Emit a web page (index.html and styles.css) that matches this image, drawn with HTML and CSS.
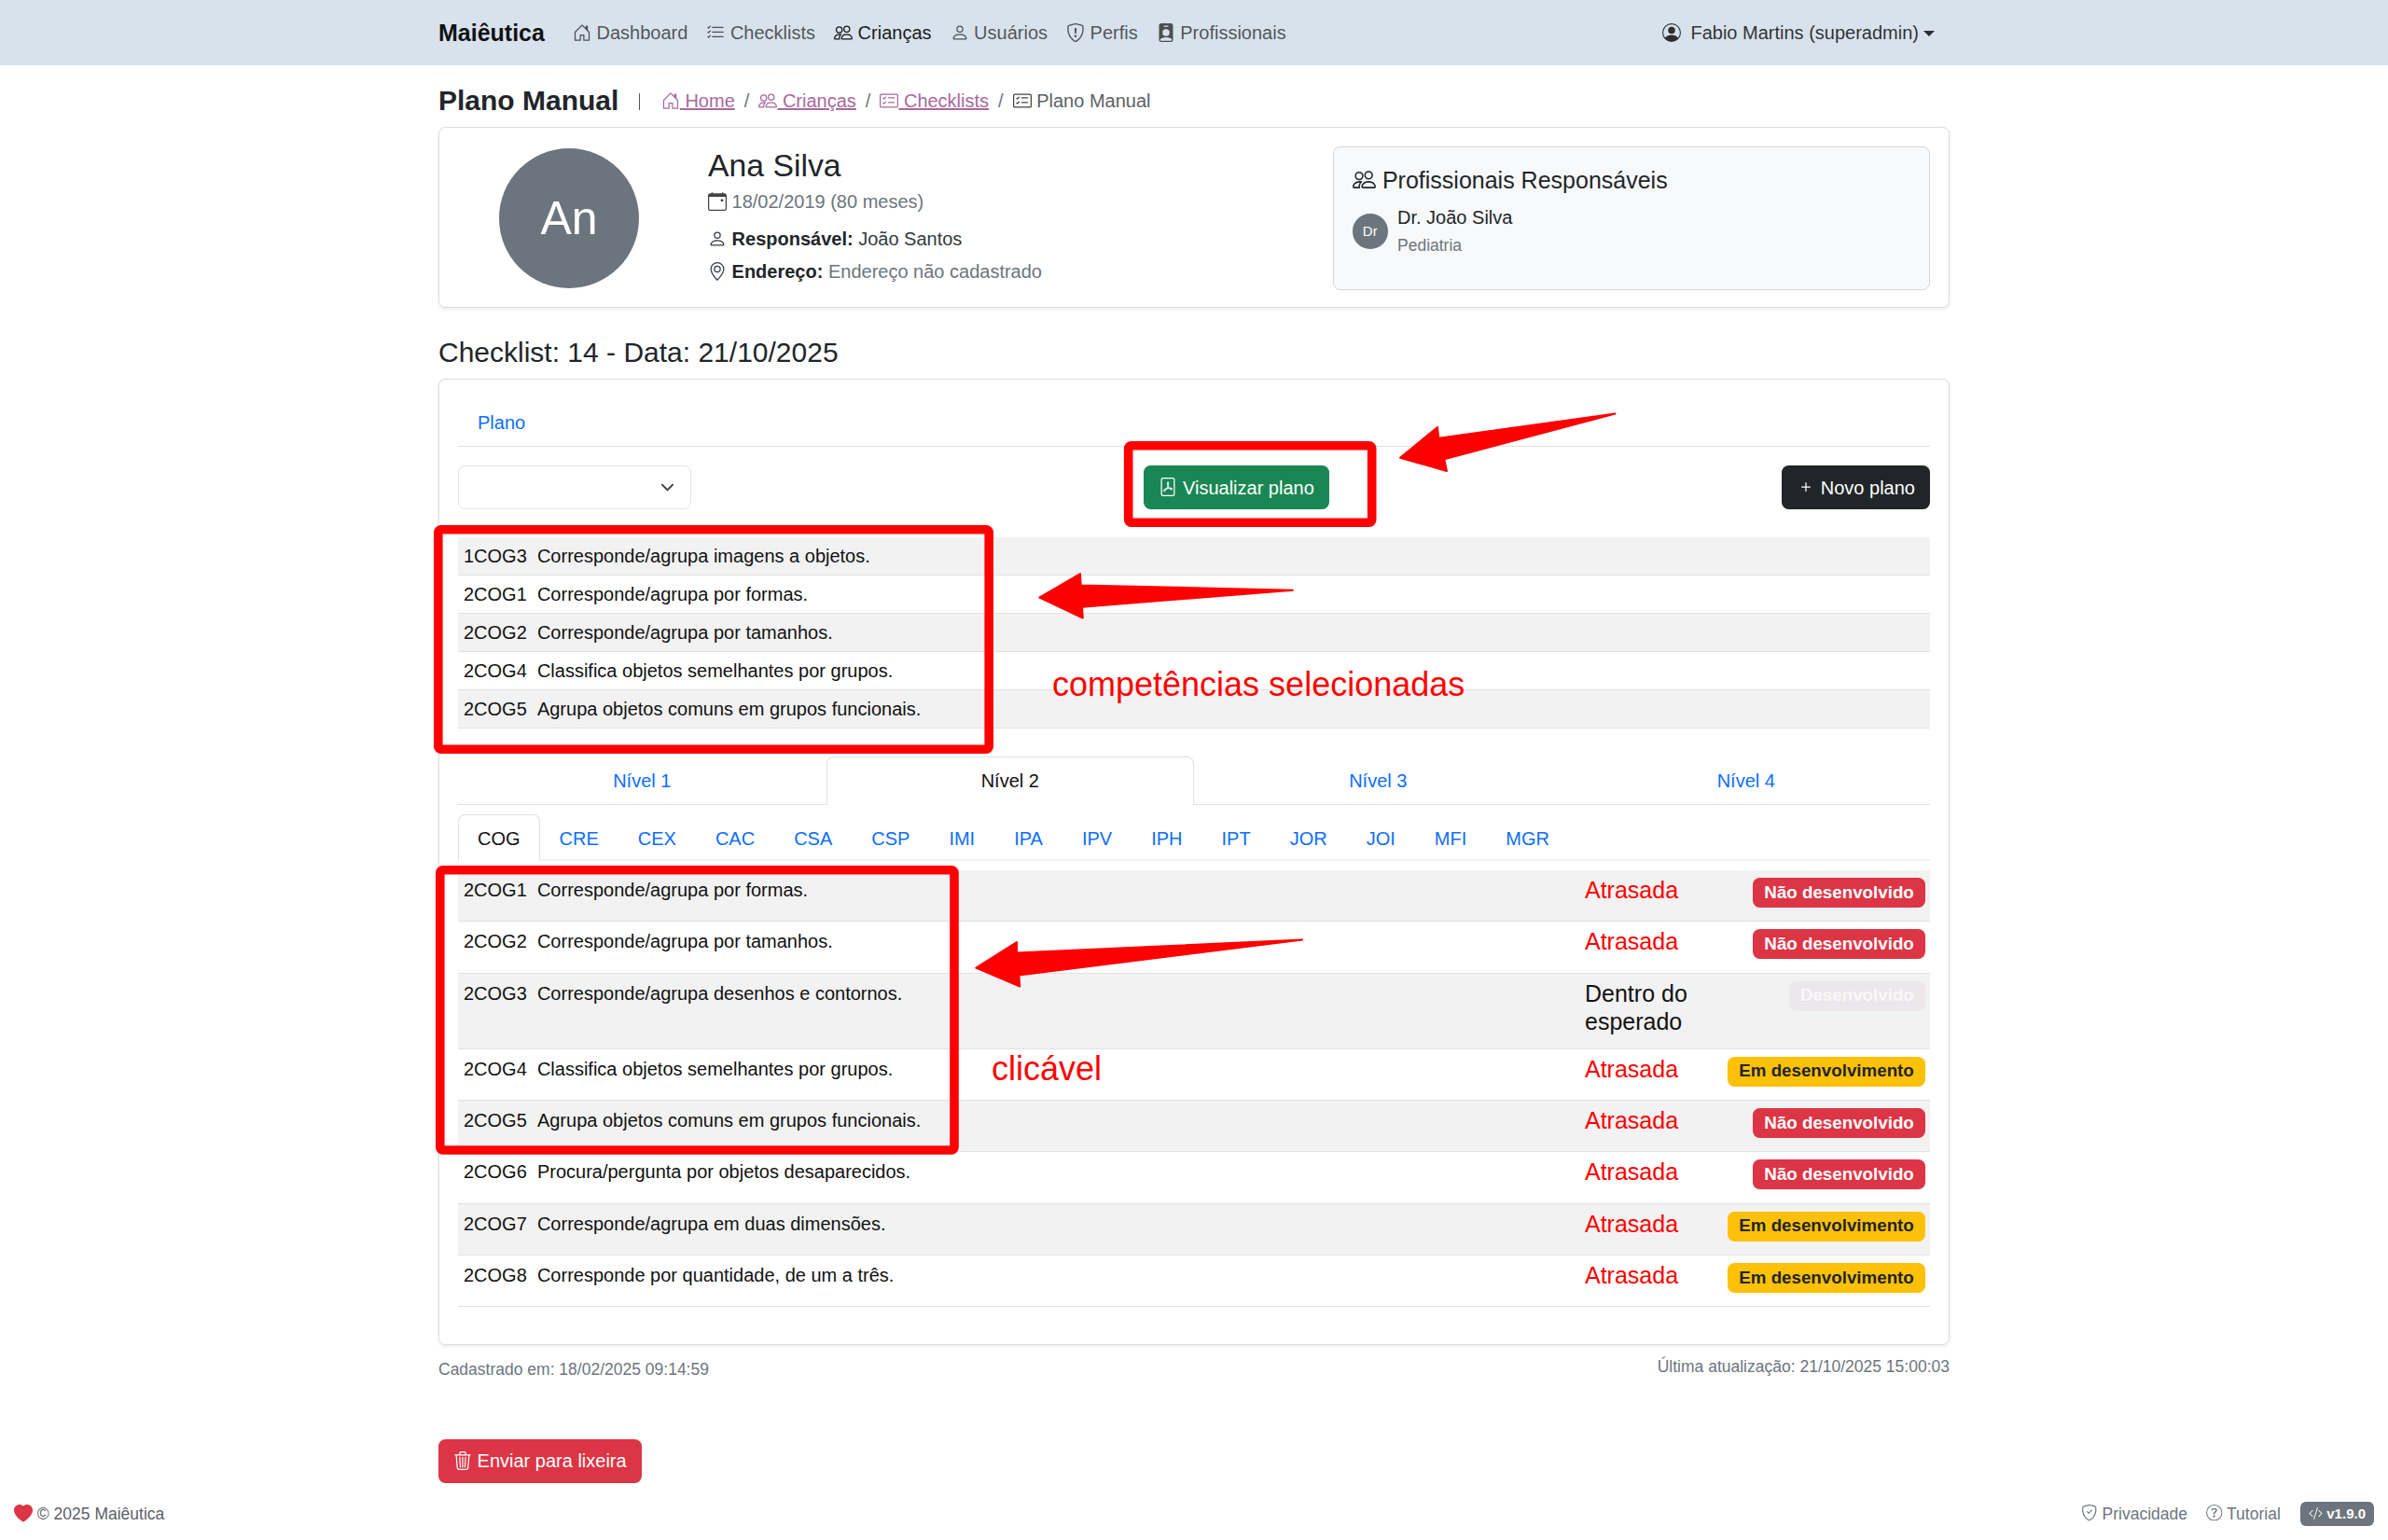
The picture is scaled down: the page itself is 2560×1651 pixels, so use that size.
FILE: index.html
```html
<!DOCTYPE html>
<html lang="pt-BR">
<head>
<meta charset="utf-8">
<title>Plano Manual - Maiêutica</title>
<link rel="stylesheet" href="styles.css">
</head>
<body>
<svg class="sprite" xmlns="http://www.w3.org/2000/svg">
<symbol id="i-house" viewBox="0 0 16 16"><path d="M8.354 1.146a.5.5 0 0 0-.708 0l-6 6A.5.5 0 0 0 1.5 7.5v7a.5.5 0 0 0 .5.5h4.5a.5.5 0 0 0 .5-.5v-4h2v4a.5.5 0 0 0 .5.5H14a.5.5 0 0 0 .5-.5v-7a.5.5 0 0 0-.146-.354L13 5.793V2.5a.5.5 0 0 0-.5-.5h-1a.5.5 0 0 0-.5.5v1.293zM2.5 14V7.707l5.5-5.5 5.5 5.5V14H10v-4a.5.5 0 0 0-.5-.5h-3a.5.5 0 0 0-.5.5v4z"/></symbol>
<symbol id="i-list" viewBox="0 0 16 16"><path fill-rule="evenodd" d="M5 11.5a.5.5 0 0 1 .5-.5h9a.5.5 0 0 1 0 1h-9a.5.5 0 0 1-.5-.5m0-4a.5.5 0 0 1 .5-.5h9a.5.5 0 0 1 0 1h-9a.5.5 0 0 1-.5-.5m0-4a.5.5 0 0 1 .5-.5h9a.5.5 0 0 1 0 1h-9a.5.5 0 0 1-.5-.5M3.854 2.146a.5.5 0 0 1 0 .708l-1.5 1.5a.5.5 0 0 1-.708 0l-.5-.5a.5.5 0 1 1 .708-.708L2 3.293l1.146-1.147a.5.5 0 0 1 .708 0m0 4a.5.5 0 0 1 0 .708l-1.5 1.5a.5.5 0 0 1-.708 0l-.5-.5a.5.5 0 1 1 .708-.708L2 7.293l1.146-1.147a.5.5 0 0 1 .708 0m0 4a.5.5 0 0 1 0 .708l-1.5 1.5a.5.5 0 0 1-.708 0l-.5-.5a.5.5 0 0 1 .708-.708l.146.147 1.146-1.147a.5.5 0 0 1 .708 0"/></symbol>
<symbol id="i-people" viewBox="0 0 16 16"><path d="M15 14s1 0 1-1-1-4-5-4-5 3-5 4 1 1 1 1zm-7.978-1L7 12.996c.001-.264.167-1.03.76-1.72C8.312 10.629 9.282 10 11 10c1.717 0 2.687.63 3.24 1.276.593.69.758 1.457.76 1.72l-.008.002-.014.002zM11 7a2 2 0 1 0 0-4 2 2 0 0 0 0 4m3-2a3 3 0 1 1-6 0 3 3 0 0 1 6 0M6.936 9.28a6 6 0 0 0-1.23-.247A7 7 0 0 0 5 9c-4 0-5 3-5 4q0 1 1 1h4.216A2.24 2.24 0 0 1 5 13c0-1.01.377-2.042 1.09-2.904.243-.294.526-.569.846-.816M4.92 10A5.5 5.5 0 0 0 4 13H1c0-.26.164-1.03.76-1.724.545-.636 1.492-1.256 3.16-1.275ZM1.5 5.5a3 3 0 1 1 6 0 3 3 0 0 1-6 0m3-2a2 2 0 1 0 0 4 2 2 0 0 0 0-4"/></symbol>
<symbol id="i-person" viewBox="0 0 16 16"><path d="M8 8a3 3 0 1 0 0-6 3 3 0 0 0 0 6m2-3a2 2 0 1 1-4 0 2 2 0 0 1 4 0m4 8c0 1-1 1-1 1H3s-1 0-1-1 1-4 6-4 6 3 6 4m-1-.004c-.001-.246-.154-.986-.832-1.664C11.516 10.68 10.289 10 8 10s-3.516.68-4.168 1.332c-.678.678-.83 1.418-.832 1.664z"/></symbol>
<symbol id="i-shield" viewBox="0 0 16 16"><path d="M5.338 1.59a61 61 0 0 0-2.837.856.48.48 0 0 0-.328.39c-.554 4.157.726 7.19 2.253 9.188a10.7 10.7 0 0 0 2.287 2.233c.346.244.652.42.893.533q.18.085.293.118a1 1 0 0 0 .101.025 1 1 0 0 0 .1-.025q.114-.034.294-.118c.24-.113.547-.29.893-.533a10.7 10.7 0 0 0 2.287-2.233c1.527-1.997 2.807-5.031 2.253-9.188a.48.48 0 0 0-.328-.39c-.651-.213-1.75-.56-2.837-.855C9.552 1.29 8.531 1.067 8 1.067c-.53 0-1.552.223-2.662.524zM5.072.56C6.157.265 7.31 0 8 0s1.843.265 2.928.56c1.11.3 2.229.655 2.887.87a1.54 1.54 0 0 1 1.044 1.262c.596 4.477-.787 7.795-2.465 9.99a11.8 11.8 0 0 1-2.517 2.453 7 7 0 0 1-1.048.625c-.28.132-.581.24-.829.24s-.548-.108-.829-.24a7 7 0 0 1-1.048-.625 11.8 11.8 0 0 1-2.517-2.453C1.928 10.487.545 7.169 1.141 2.692A1.54 1.54 0 0 1 2.185 1.43 63 63 0 0 1 5.072.56"/><path d="M7.001 11a1 1 0 1 1 2 0 1 1 0 0 1-2 0M7.1 4.995a.905.905 0 1 1 1.8 0l-.35 3.507a.553.553 0 0 1-1.1 0z"/></symbol>
<symbol id="i-shield-check" viewBox="0 0 16 16"><path d="M5.338 1.59a61 61 0 0 0-2.837.856.48.48 0 0 0-.328.39c-.554 4.157.726 7.19 2.253 9.188a10.7 10.7 0 0 0 2.287 2.233c.346.244.652.42.893.533q.18.085.293.118a1 1 0 0 0 .101.025 1 1 0 0 0 .1-.025q.114-.034.294-.118c.24-.113.547-.29.893-.533a10.7 10.7 0 0 0 2.287-2.233c1.527-1.997 2.807-5.031 2.253-9.188a.48.48 0 0 0-.328-.39c-.651-.213-1.75-.56-2.837-.855C9.552 1.29 8.531 1.067 8 1.067c-.53 0-1.552.223-2.662.524zM5.072.56C6.157.265 7.31 0 8 0s1.843.265 2.928.56c1.11.3 2.229.655 2.887.87a1.54 1.54 0 0 1 1.044 1.262c.596 4.477-.787 7.795-2.465 9.99a11.8 11.8 0 0 1-2.517 2.453 7 7 0 0 1-1.048.625c-.28.132-.581.24-.829.24s-.548-.108-.829-.24a7 7 0 0 1-1.048-.625 11.8 11.8 0 0 1-2.517-2.453C1.928 10.487.545 7.169 1.141 2.692A1.54 1.54 0 0 1 2.185 1.43 63 63 0 0 1 5.072.56"/><path d="M10.854 5.146a.5.5 0 0 1 0 .708l-3 3a.5.5 0 0 1-.708 0l-1.5-1.5a.5.5 0 1 1 .708-.708L7.5 7.793l2.646-2.647a.5.5 0 0 1 .708 0"/></symbol>
<symbol id="i-badge" viewBox="0 0 16 16"><path d="M2 2a2 2 0 0 1 2-2h8a2 2 0 0 1 2 2v12a2 2 0 0 1-2 2H4a2 2 0 0 1-2-2zm4.5 0a.5.5 0 0 0 0 1h3a.5.5 0 0 0 0-1zM8 11a3 3 0 1 0 0-6 3 3 0 0 0 0 6m5 2.755C12.146 12.825 10.623 12 8 12s-4.146.826-5 1.755V14a1 1 0 0 0 1 1h8a1 1 0 0 0 1-1z"/></symbol>
<symbol id="i-circle" viewBox="0 0 16 16"><path d="M11 6a3 3 0 1 1-6 0 3 3 0 0 1 6 0"/><path fill-rule="evenodd" d="M0 8a8 8 0 1 1 16 0A8 8 0 0 1 0 8m8-7a7 7 0 0 0-5.468 11.37C3.242 11.226 4.805 10 8 10s4.757 1.225 5.468 2.37A7 7 0 0 0 8 1"/></symbol>
<symbol id="i-calendar" viewBox="0 0 16 16"><path d="M11 6.5a.5.5 0 0 1 .5-.5h1a.5.5 0 0 1 .5.5v1a.5.5 0 0 1-.5.5h-1a.5.5 0 0 1-.5-.5z"/><path d="M3.5 0a.5.5 0 0 1 .5.5V1h8V.5a.5.5 0 0 1 1 0V1h1a2 2 0 0 1 2 2v11a2 2 0 0 1-2 2H2a2 2 0 0 1-2-2V3a2 2 0 0 1 2-2h1V.5a.5.5 0 0 1 .5-.5M1 4v10a1 1 0 0 0 1 1h12a1 1 0 0 0 1-1V4z"/></symbol>
<symbol id="i-geo" viewBox="0 0 16 16"><path d="M12.166 8.94c-.524 1.062-1.234 2.12-1.96 3.07A32 32 0 0 1 8 14.58a32 32 0 0 1-2.206-2.57c-.726-.95-1.436-2.008-1.96-3.07C3.304 7.867 3 6.862 3 6a5 5 0 0 1 10 0c0 .862-.305 1.867-.834 2.94M8 16s6-5.686 6-10A6 6 0 0 0 2 6c0 4.314 6 10 6 10"/><path d="M8 8a2 2 0 1 1 0-4 2 2 0 0 1 0 4m0 1a3 3 0 1 0 0-6 3 3 0 0 0 0 6"/></symbol>
<symbol id="i-card" viewBox="0 0 16 16"><path d="M14.5 3a.5.5 0 0 1 .5.5v9a.5.5 0 0 1-.5.5h-13a.5.5 0 0 1-.5-.5v-9a.5.5 0 0 1 .5-.5zm-13-1A1.5 1.5 0 0 0 0 3.5v9A1.5 1.5 0 0 0 1.5 14h13a1.5 1.5 0 0 0 1.5-1.5v-9A1.5 1.5 0 0 0 14.5 2z"/><path d="M7 5.5a.5.5 0 0 1 .5-.5h5a.5.5 0 0 1 0 1h-5a.5.5 0 0 1-.5-.5m-1.496-.854a.5.5 0 0 1 0 .708l-1.5 1.5a.5.5 0 0 1-.708 0l-.5-.5a.5.5 0 1 1 .708-.708l.146.147 1.146-1.147a.5.5 0 0 1 .708 0M7 9.5a.5.5 0 0 1 .5-.5h5a.5.5 0 0 1 0 1h-5a.5.5 0 0 1-.5-.5m-1.496-.854a.5.5 0 0 1 0 .708l-1.5 1.5a.5.5 0 0 1-.708 0l-.5-.5a.5.5 0 0 1 .708-.708l.146.147 1.146-1.147a.5.5 0 0 1 .708 0"/></symbol>
<symbol id="i-pdf" viewBox="0 0 16 16"><path d="M4 0a2 2 0 0 0-2 2v12a2 2 0 0 0 2 2h8a2 2 0 0 0 2-2V2a2 2 0 0 0-2-2zm0 1h8a1 1 0 0 1 1 1v12a1 1 0 0 1-1 1H4a1 1 0 0 1-1-1V2a1 1 0 0 1 1-1"/><path d="M4.603 12.087a.8.8 0 0 1-.438-.42c-.195-.388-.13-.776.08-1.102.198-.307.526-.568.897-.787a7.7 7.7 0 0 1 1.482-.645 20 20 0 0 0 1.062-2.227 7.3 7.3 0 0 1-.43-1.295c-.086-.4-.119-.796-.046-1.136.075-.354.274-.672.65-.823.192-.077.4-.12.602-.077a.7.7 0 0 1 .477.365c.088.164.12.356.127.538.007.187-.012.395-.047.614-.084.51-.27 1.134-.52 1.794a11 11 0 0 0 .98 1.686 5.8 5.8 0 0 1 1.334.05c.364.065.734.195.96.465.12.144.193.32.2.518.007.192-.047.382-.138.563a1.04 1.04 0 0 1-.354.416.86.86 0 0 1-.51.138c-.331-.014-.654-.196-.933-.417a5.7 5.7 0 0 1-.911-.95 11.6 11.6 0 0 0-1.997.406 11.3 11.3 0 0 1-1.021 1.51c-.29.35-.608.655-.926.787a.8.8 0 0 1-.58.029m1.379-1.901q-.25.115-.459.238c-.328.194-.541.383-.647.547-.094.145-.096.25-.04.361q.016.032.026.044l.035-.012c.137-.056.355-.235.635-.572a8 8 0 0 0 .45-.606m1.64-1.33a13 13 0 0 1 1.01-.193 12 12 0 0 1-.51-.858 21 21 0 0 1-.5 1.05zm2.446.45q.226.245.435.41c.24.19.407.253.498.256a.1.1 0 0 0 .07-.015.3.3 0 0 0 .094-.125.44.44 0 0 0 .059-.2.1.1 0 0 0-.026-.063c-.052-.062-.2-.152-.518-.209a4 4 0 0 0-.612-.053zM8.078 5.8a7 7 0 0 0 .2-.828q.046-.282.038-.465a.6.6 0 0 0-.032-.198.5.5 0 0 0-.145.04c-.087.035-.158.106-.196.283-.04.192-.03.469.046.822q.036.167.09.346z"/></symbol>
<symbol id="i-trash" viewBox="0 0 16 16"><path d="M6.5 1h3a.5.5 0 0 1 .5.5v1H6v-1a.5.5 0 0 1 .5-.5M11 2.5v-1A1.5 1.5 0 0 0 9.5 0h-3A1.5 1.5 0 0 0 5 1.5v1H1.5a.5.5 0 0 0 0 1h.538l.853 10.66A2 2 0 0 0 4.885 16h6.23a2 2 0 0 0 1.994-1.84l.853-10.66h.538a.5.5 0 0 0 0-1zm1.958 1-.846 10.58a1 1 0 0 1-.997.92h-6.23a1 1 0 0 1-.997-.92L3.042 3.5zm-7.487 1a.5.5 0 0 1 .528.47l.5 8.5a.5.5 0 0 1-.998.06L5 5.03a.5.5 0 0 1 .47-.53Zm5.058 0a.5.5 0 0 1 .47.53l-.5 8.5a.5.5 0 1 1-.998-.06l.5-8.5a.5.5 0 0 1 .528-.47M8 4.5a.5.5 0 0 1 .5.5v8.5a.5.5 0 0 1-1 0V5a.5.5 0 0 1 .5-.5"/></symbol>
<symbol id="i-heart" viewBox="0 0 16 16"><path fill-rule="evenodd" d="M8 1.314C12.438-3.248 23.534 4.735 8 15-7.534 4.736 3.562-3.248 8 1.314"/></symbol>
<symbol id="i-question" viewBox="0 0 16 16"><path d="M8 15A7 7 0 1 1 8 1a7 7 0 0 1 0 14m0 1A8 8 0 1 0 8 0a8 8 0 0 0 0 16"/><path d="M5.255 5.786a.237.237 0 0 0 .241.247h.825c.138 0 .248-.113.266-.25.09-.656.54-1.134 1.342-1.134.686 0 1.314.343 1.314 1.168 0 .635-.374.927-.965 1.371-.673.489-1.206 1.06-1.168 1.987l.003.217a.25.25 0 0 0 .25.246h.811a.25.25 0 0 0 .25-.25v-.105c0-.718.273-.927 1.01-1.486.609-.463 1.244-.977 1.244-2.056 0-1.511-1.276-2.241-2.673-2.241-1.267 0-2.655.59-2.75 2.286m1.557 5.763c0 .533.425.927 1.01.927.609 0 1.028-.394 1.028-.927 0-.552-.42-.94-1.029-.94-.584 0-1.009.388-1.009.94"/></symbol>
<symbol id="i-code" viewBox="0 0 16 16"><path d="M10.478 1.647a.5.5 0 1 0-.956-.294l-4 13a.5.5 0 0 0 .956.294zM4.854 4.146a.5.5 0 0 1 0 .708L1.707 8l3.147 3.146a.5.5 0 0 1-.708.708l-3.5-3.5a.5.5 0 0 1 0-.708l3.5-3.5a.5.5 0 0 1 .708 0m6.292 0a.5.5 0 0 0 0 .708L14.293 8l-3.147 3.146a.5.5 0 0 0 .708.708l3.5-3.5a.5.5 0 0 0 0-.708l-3.5-3.5a.5.5 0 0 0-.708 0"/></symbol>
<symbol id="i-plus" viewBox="0 0 16 16"><path d="M8 4a.5.5 0 0 1 .5.5v3h3a.5.5 0 0 1 0 1h-3v3a.5.5 0 0 1-1 0v-3h-3a.5.5 0 0 1 0-1h3v-3A.5.5 0 0 1 8 4"/></symbol>
<symbol id="i-chevron" viewBox="0 0 16 16"><path fill="none" stroke="#343a40" stroke-linecap="round" stroke-linejoin="round" stroke-width="2" d="m2 5 6 6 6-6"/></symbol>
</svg>

<header class="navbar">
  <div class="container navbar-inner">
    <a class="brand">Maiêutica</a>
    <nav class="nav-links">
      <a class="nav-link"><svg class="bi"><use href="#i-house"/></svg> Dashboard</a>
      <a class="nav-link"><svg class="bi"><use href="#i-list"/></svg> Checklists</a>
      <a class="nav-link active"><svg class="bi"><use href="#i-people"/></svg> Crianças</a>
      <a class="nav-link"><svg class="bi"><use href="#i-person"/></svg> Usuários</a>
      <a class="nav-link"><svg class="bi"><use href="#i-shield"/></svg> Perfis</a>
      <a class="nav-link"><svg class="bi"><use href="#i-badge"/></svg> Profissionais</a>
    </nav>
    <a class="user-menu"><svg class="bi user-icon"><use href="#i-circle"/></svg> Fabio Martins (superadmin)<span class="caret"></span></a>
  </div>
</header>

<main class="container">
  <div class="title-row">
    <h1 class="page-title">Plano Manual</h1>
    <span class="title-divider"></span>
    <ol class="breadcrumb">
      <li><a><svg class="bi"><use href="#i-house"/></svg><u> Home</u></a></li>
      <li class="sep">/</li>
      <li><a><svg class="bi"><use href="#i-people"/></svg><u> Crianças</u></a></li>
      <li class="sep">/</li>
      <li><a><svg class="bi"><use href="#i-card"/></svg><u> Checklists</u></a></li>
      <li class="sep">/</li>
      <li class="current"><svg class="bi"><use href="#i-card"/></svg> Plano Manual</li>
    </ol>
  </div>

  <section class="card profile">
    <div class="avatar-col"><div class="avatar">An</div></div>
    <div class="info">
      <h2 class="child-name">Ana Silva</h2>
      <p class="info-date"><svg class="bi"><use href="#i-calendar"/></svg> 18/02/2019 (80 meses)</p>
      <p class="info-line"><svg class="bi"><use href="#i-person"/></svg> <strong>Responsável:</strong> João Santos</p>
      <p class="info-line"><svg class="bi"><use href="#i-geo"/></svg> <strong>Endereço:</strong> <span class="muted">Endereço não cadastrado</span></p>
    </div>
    <aside class="pros">
      <h3 class="pros-title"><svg class="bi"><use href="#i-people"/></svg> Profissionais Responsáveis</h3>
      <div class="pro">
        <div class="pro-avatar">Dr</div>
        <div>
          <div>Dr. João Silva</div>
          <div class="pro-role">Pediatria</div>
        </div>
      </div>
    </aside>
  </section>

  <h2 class="checklist-title">Checklist: 14 - Data: 21/10/2025</h2>

  <section class="card plan">
    <div class="tabs tabs-plain"><a class="tab">Plano</a></div>

    <div class="plan-actions">
      <div class="select"><svg class="chevron"><use href="#i-chevron"/></svg></div>
      <a class="btn btn-success"><svg class="bi"><use href="#i-pdf"/></svg> Visualizar plano</a>
      <a class="btn btn-dark"><svg class="bi"><use href="#i-plus"/></svg> Novo plano</a>
    </div>

    <table class="table table-selected">
      <tbody>
        <tr><td><span class="code">1COG3</span><span>Corresponde/agrupa imagens a objetos.</span></td></tr>
        <tr><td><span class="code">2COG1</span><span>Corresponde/agrupa por formas.</span></td></tr>
        <tr><td><span class="code">2COG2</span><span>Corresponde/agrupa por tamanhos.</span></td></tr>
        <tr><td><span class="code">2COG4</span><span>Classifica objetos semelhantes por grupos.</span></td></tr>
        <tr><td><span class="code">2COG5</span><span>Agrupa objetos comuns em grupos funcionais.</span></td></tr>
      </tbody>
    </table>

    <div class="tabs tabs-levels">
      <a class="tab">Nível 1</a>
      <a class="tab active">Nível 2</a>
      <a class="tab">Nível 3</a>
      <a class="tab">Nível 4</a>
    </div>

    <div class="tabs tabs-areas">
      <a class="tab active">COG</a><a class="tab">CRE</a><a class="tab">CEX</a><a class="tab">CAC</a><a class="tab">CSA</a><a class="tab">CSP</a><a class="tab">IMI</a><a class="tab">IPA</a><a class="tab">IPV</a><a class="tab">IPH</a><a class="tab">IPT</a><a class="tab">JOR</a><a class="tab">JOI</a><a class="tab">MFI</a><a class="tab">MGR</a>
    </div>

    <table class="table table-skills">
      <colgroup><col class="col-main"><col class="col-status"><col class="col-badge"></colgroup>
      <tbody>
        <tr><td><span class="code">2COG1</span><span>Corresponde/agrupa por formas.</span></td><td><div class="status late">Atrasada</div></td><td><div class="badge-wrap"><span class="badge badge-red">Não desenvolvido</span></div></td></tr>
        <tr><td><span class="code">2COG2</span><span>Corresponde/agrupa por tamanhos.</span></td><td><div class="status late">Atrasada</div></td><td><div class="badge-wrap"><span class="badge badge-red">Não desenvolvido</span></div></td></tr>
        <tr><td><span class="code">2COG3</span><span>Corresponde/agrupa desenhos e contornos.</span></td><td><div class="status">Dentro do esperado</div></td><td><div class="badge-wrap"><span class="badge badge-faded">Desenvolvido</span></div></td></tr>
        <tr><td><span class="code">2COG4</span><span>Classifica objetos semelhantes por grupos.</span></td><td><div class="status late">Atrasada</div></td><td><div class="badge-wrap"><span class="badge badge-yellow">Em desenvolvimento</span></div></td></tr>
        <tr><td><span class="code">2COG5</span><span>Agrupa objetos comuns em grupos funcionais.</span></td><td><div class="status late">Atrasada</div></td><td><div class="badge-wrap"><span class="badge badge-red">Não desenvolvido</span></div></td></tr>
        <tr><td><span class="code">2COG6</span><span>Procura/pergunta por objetos desaparecidos.</span></td><td><div class="status late">Atrasada</div></td><td><div class="badge-wrap"><span class="badge badge-red">Não desenvolvido</span></div></td></tr>
        <tr><td><span class="code">2COG7</span><span>Corresponde/agrupa em duas dimensões.</span></td><td><div class="status late">Atrasada</div></td><td><div class="badge-wrap"><span class="badge badge-yellow">Em desenvolvimento</span></div></td></tr>
        <tr><td><span class="code">2COG8</span><span>Corresponde por quantidade, de um a três.</span></td><td><div class="status late">Atrasada</div></td><td><div class="badge-wrap"><span class="badge badge-yellow">Em desenvolvimento</span></div></td></tr>
      </tbody>
    </table>
  </section>

  <div class="meta-row">
    <span class="meta-created">Cadastrado em: 18/02/2025 09:14:59</span>
    <span>Última atualização: 21/10/2025 15:00:03</span>
  </div>

  <a class="btn btn-danger"><svg class="bi"><use href="#i-trash"/></svg> Enviar para lixeira</a>
</main>

<footer class="footer">
  <div class="footer-left"><svg class="bi heart"><use href="#i-heart"/></svg> © 2025 Maiêutica</div>
  <div class="footer-right">
    <a><svg class="bi"><use href="#i-shield-check"/></svg> Privacidade</a>
    <a><svg class="bi"><use href="#i-question"/></svg> Tutorial</a>
    <span class="version"><svg class="bi"><use href="#i-code"/></svg> v1.9.0</span>
  </div>
</footer>

<div class="annotations">
  <svg class="annot-svg" viewBox="0 0 2560 1651" xmlns="http://www.w3.org/2000/svg">
    <g class="annot-box">
      <rect x="1209.7" y="477.8" width="261" height="82.4" rx="3"/>
      <rect x="469.8" y="567.8" width="590.4" height="235.4" rx="3"/>
      <rect x="471.8" y="932.8" width="551.2" height="300.2" rx="3"/>
    </g>
    <g class="annot-arrow">
      <polygon points="1501,490.7 1541,458 1542.3,469.8 1731.5,443.5 1548.3,492.2 1551,505"/>
      <polygon points="1114.3,640.7 1158,615 1158.7,627.5 1386,632.7 1160,650.8 1160.8,662.5"/>
      <polygon points="1046.3,1037.7 1090,1010 1090,1021.5 1396,1007.5 1092.3,1045.5 1093.3,1057.5"/>
    </g>
  </svg>
  <div class="annot-text annot-competencias">competências selecionadas</div>
  <div class="annot-text annot-clicavel">clicável</div>
</div>
</body>
</html>
```

FILE: styles.css
```css
* { box-sizing: border-box; }
html, body { margin: 0; padding: 0; }
body {
  position: relative;
  min-height: 1651px;
  background: #fff;
  color: #212529;
  font-family: "Liberation Sans", Arial, sans-serif;
  font-size: 20px;
  line-height: 30px;
  overflow-x: hidden;
}
.sprite { position: absolute; width: 0; height: 0; overflow: hidden; }
.bi { display: inline-block; width: 1em; height: 1em; fill: currentColor; vertical-align: -.125em; }
a { text-decoration: none; color: inherit; cursor: pointer; }
h1, h2, h3, p, ol { margin: 0; padding: 0; font-weight: 400; }
.container { width: 1620px; margin: 0 auto; }

/* navbar */
.navbar { height: 70px; background: #d8e2ec; }
.navbar-inner { height: 70px; display: flex; align-items: center; }
.brand { font-size: 25px; font-weight: 700; color: #111; margin-right: 20px; }
.nav-links { display: flex; }
.nav-link { padding: 0 10px; color: rgba(0,0,0,.65); white-space: nowrap; }
.nav-link.active { color: rgba(0,0,0,.9); }
.user-menu { margin-left: auto; padding-right: 16px; color: rgba(0,0,0,.8); white-space: nowrap; }
.user-icon { margin-right: 5px; }
.caret {
  display: inline-block; margin-left: 5px; vertical-align: 3px;
  border-top: 6px solid; border-left: 6px solid transparent; border-right: 6px solid transparent;
}

/* title */
.title-row { display: flex; align-items: center; height: 36px; margin: 20px 0 10px; }
.page-title { font-size: 30px; line-height: 36px; font-weight: 700; color: #212529; }
.title-divider { width: 1px; height: 18px; background: #555; margin: 2px 22.5px 0 22px; }
.breadcrumb { list-style: none; display: flex; color: #555; }
.breadcrumb a { color: #a8689b; }
.breadcrumb .sep { padding: 0 10px; color: #6c757d; }
.breadcrumb .current { color: #5c6167; }
.breadcrumb .current .bi { color: #444; }

/* cards */
.card { background: #fff; border: 1px solid #dcdcdc; border-radius: 7.5px; box-shadow: 0 2px 4px rgba(0,0,0,.075); padding: 20px; }
.profile { display: grid; grid-template-columns: 238px 1fr 640px; height: 194px; }
.avatar-col { display: flex; align-items: center; justify-content: center; }
.avatar { width: 150px; height: 150px; border-radius: 50%; background: #6c757d; color: #fff; font-size: 50px; display: flex; align-items: center; justify-content: center; }
.info { padding-left: 30px; }
.child-name { font-size: 33.75px; line-height: 40.5px; margin-bottom: 3.5px; color: #212529; }
.info-date { color: #6c757d; margin-bottom: 10px; }
.info-date .bi { color: #444; }
.info-line { margin-bottom: 5px; color: #343a40; }
.info-line strong { color: #212529; }
.muted { color: #6c757d; }
.pros { background: #f8f9fa; border: 1px solid #d5d7d9; border-radius: 7.5px; padding: 20px; }
.pros-title { font-size: 25px; line-height: 30px; margin-bottom: 10px; }
.pro { display: flex; align-items: center; }
.pro-avatar { width: 37.5px; height: 37.5px; border-radius: 50%; background: #6c757d; color: #fff; font-size: 15px; display: flex; align-items: center; justify-content: center; margin-right: 10.5px; flex: none; }
.pro-role { font-size: 17.5px; color: #6c757d; }

.checklist-title { font-size: 30px; line-height: 36px; margin: 30px 0 10px; }

/* tabs */
.tabs { display: flex; border-bottom: 1px solid #dee2e6; }
.tab { padding: 10px 20px; color: #0d6efd; border: 1px solid transparent; border-bottom: 0; border-radius: 7.5px 7.5px 0 0; margin-bottom: -1px; white-space: nowrap; }
.tab.active { color: #111; background: #fff; border-color: #dee2e6; border-bottom: 1px solid #fff; }
.tabs-plain { height: 52px; }
.tabs-levels { margin-top: 30px; height: 52px; }
.tabs-levels .tab { flex: 1; text-align: center; }
.tabs-areas { margin-top: 10px; border-bottom: 2px solid #f0f1f3; height: 50px; }
.tabs-areas .tab { height: 50px; padding-top: 10px; padding-bottom: 0; border-bottom: 0; margin-bottom: 0; }
.tabs-areas .tab.active { border-bottom: 0; }

/* actions */
.plan-actions { display: flex; justify-content: space-between; align-items: center; margin: 20px 0 30px; }
.select { width: 250px; height: 47px; background: #fff; border: 1px solid #e2e5e8; border-radius: 7.5px; display: flex; align-items: center; justify-content: flex-end; padding-right: 15px; }
.chevron { width: 15px; height: 15px; margin-right: 2px; }
.btn { display: inline-block; padding: 7.5px 15px; border: 1px solid transparent; border-radius: 7.5px; color: #fff; white-space: nowrap; }
.btn-success { background: #198754; }
.btn-dark { background: #212529; }
.btn-danger { background: #dc3545; margin-top: 61px; }

/* tables */
.table { width: 100%; border-collapse: separate; border-spacing: 0; color: #111; }
.table td { padding: 5px; border-bottom: 1px solid #dee2e6; vertical-align: top; }
.table td:first-child { padding-left: 6px; }
.code { margin-right: 11.1px; }
.table tr:nth-child(odd) td { background: #f2f2f2; }
.table-selected { margin: 0; }
.table-skills { margin: 10px 0 20px; table-layout: fixed; }
.table-skills td { padding-top: 6px; }
.col-main { width: 1203px; }
.col-status { width: 153px; }
.col-badge { width: 222px; }
.status { font-size: 25px; line-height: 30px; margin-bottom: 9px; color: #111; }
.status.late { color: #f00; }
.badge-wrap { text-align: right; line-height: 0; margin: 2px 0 9.5px; white-space: nowrap; }
.badge { display: inline-block; font-size: 18.75px; font-weight: 700; line-height: 18.75px; padding: 6.56px 12.2px; border-radius: 7.5px; }
.badge-red { background: #dc3545; color: #fff; }
.badge-yellow { background: #ffc107; color: #212529; }
.badge-faded { background: #ebe7eb; color: #f9f7f9; }

/* meta */
.meta-row { display: flex; justify-content: space-between; align-items: flex-start; margin-top: 10px; font-size: 17.5px; line-height: 26.25px; color: #6c757d; }
.meta-created { padding-top: 3px; }

/* footer */
.footer { display: flex; justify-content: space-between; align-items: center; margin-top: 20px; padding: 0 15px 0 15px; font-size: 17.5px; line-height: 26.25px; color: #6c757d; }
.footer-left { color: #5c6167; }
.heart { color: #dc3545; width: 20px; height: 20px; vertical-align: -4px; }
.footer-right { display: flex; align-items: center; gap: 20px; }
.version { display: inline-flex; align-items: center; gap: 4px; height: 26px; padding: 0 9px; margin-left: 1.5px; background: #6c757d; color: #fff; font-size: 15px; font-weight: 700; border-radius: 6px; }

/* annotations over the screenshot */
.annotations { position: absolute; left: 0; top: 0; width: 2560px; height: 1651px; pointer-events: none; }
.annot-svg { position: absolute; left: 0; top: 0; width: 2560px; height: 1651px; }
.annot-box rect { fill: none; stroke: #f00; stroke-width: 9.6; }
.annot-arrow polygon { fill: #f00; stroke: #f00; stroke-width: 2; stroke-linejoin: round; }
.annot-text { position: absolute; color: #f00; font-size: 36px; line-height: 42px; white-space: nowrap; }
.annot-competencias { left: 1128px; top: 713px; }
.annot-clicavel { left: 1063px; top: 1125px; }
```
